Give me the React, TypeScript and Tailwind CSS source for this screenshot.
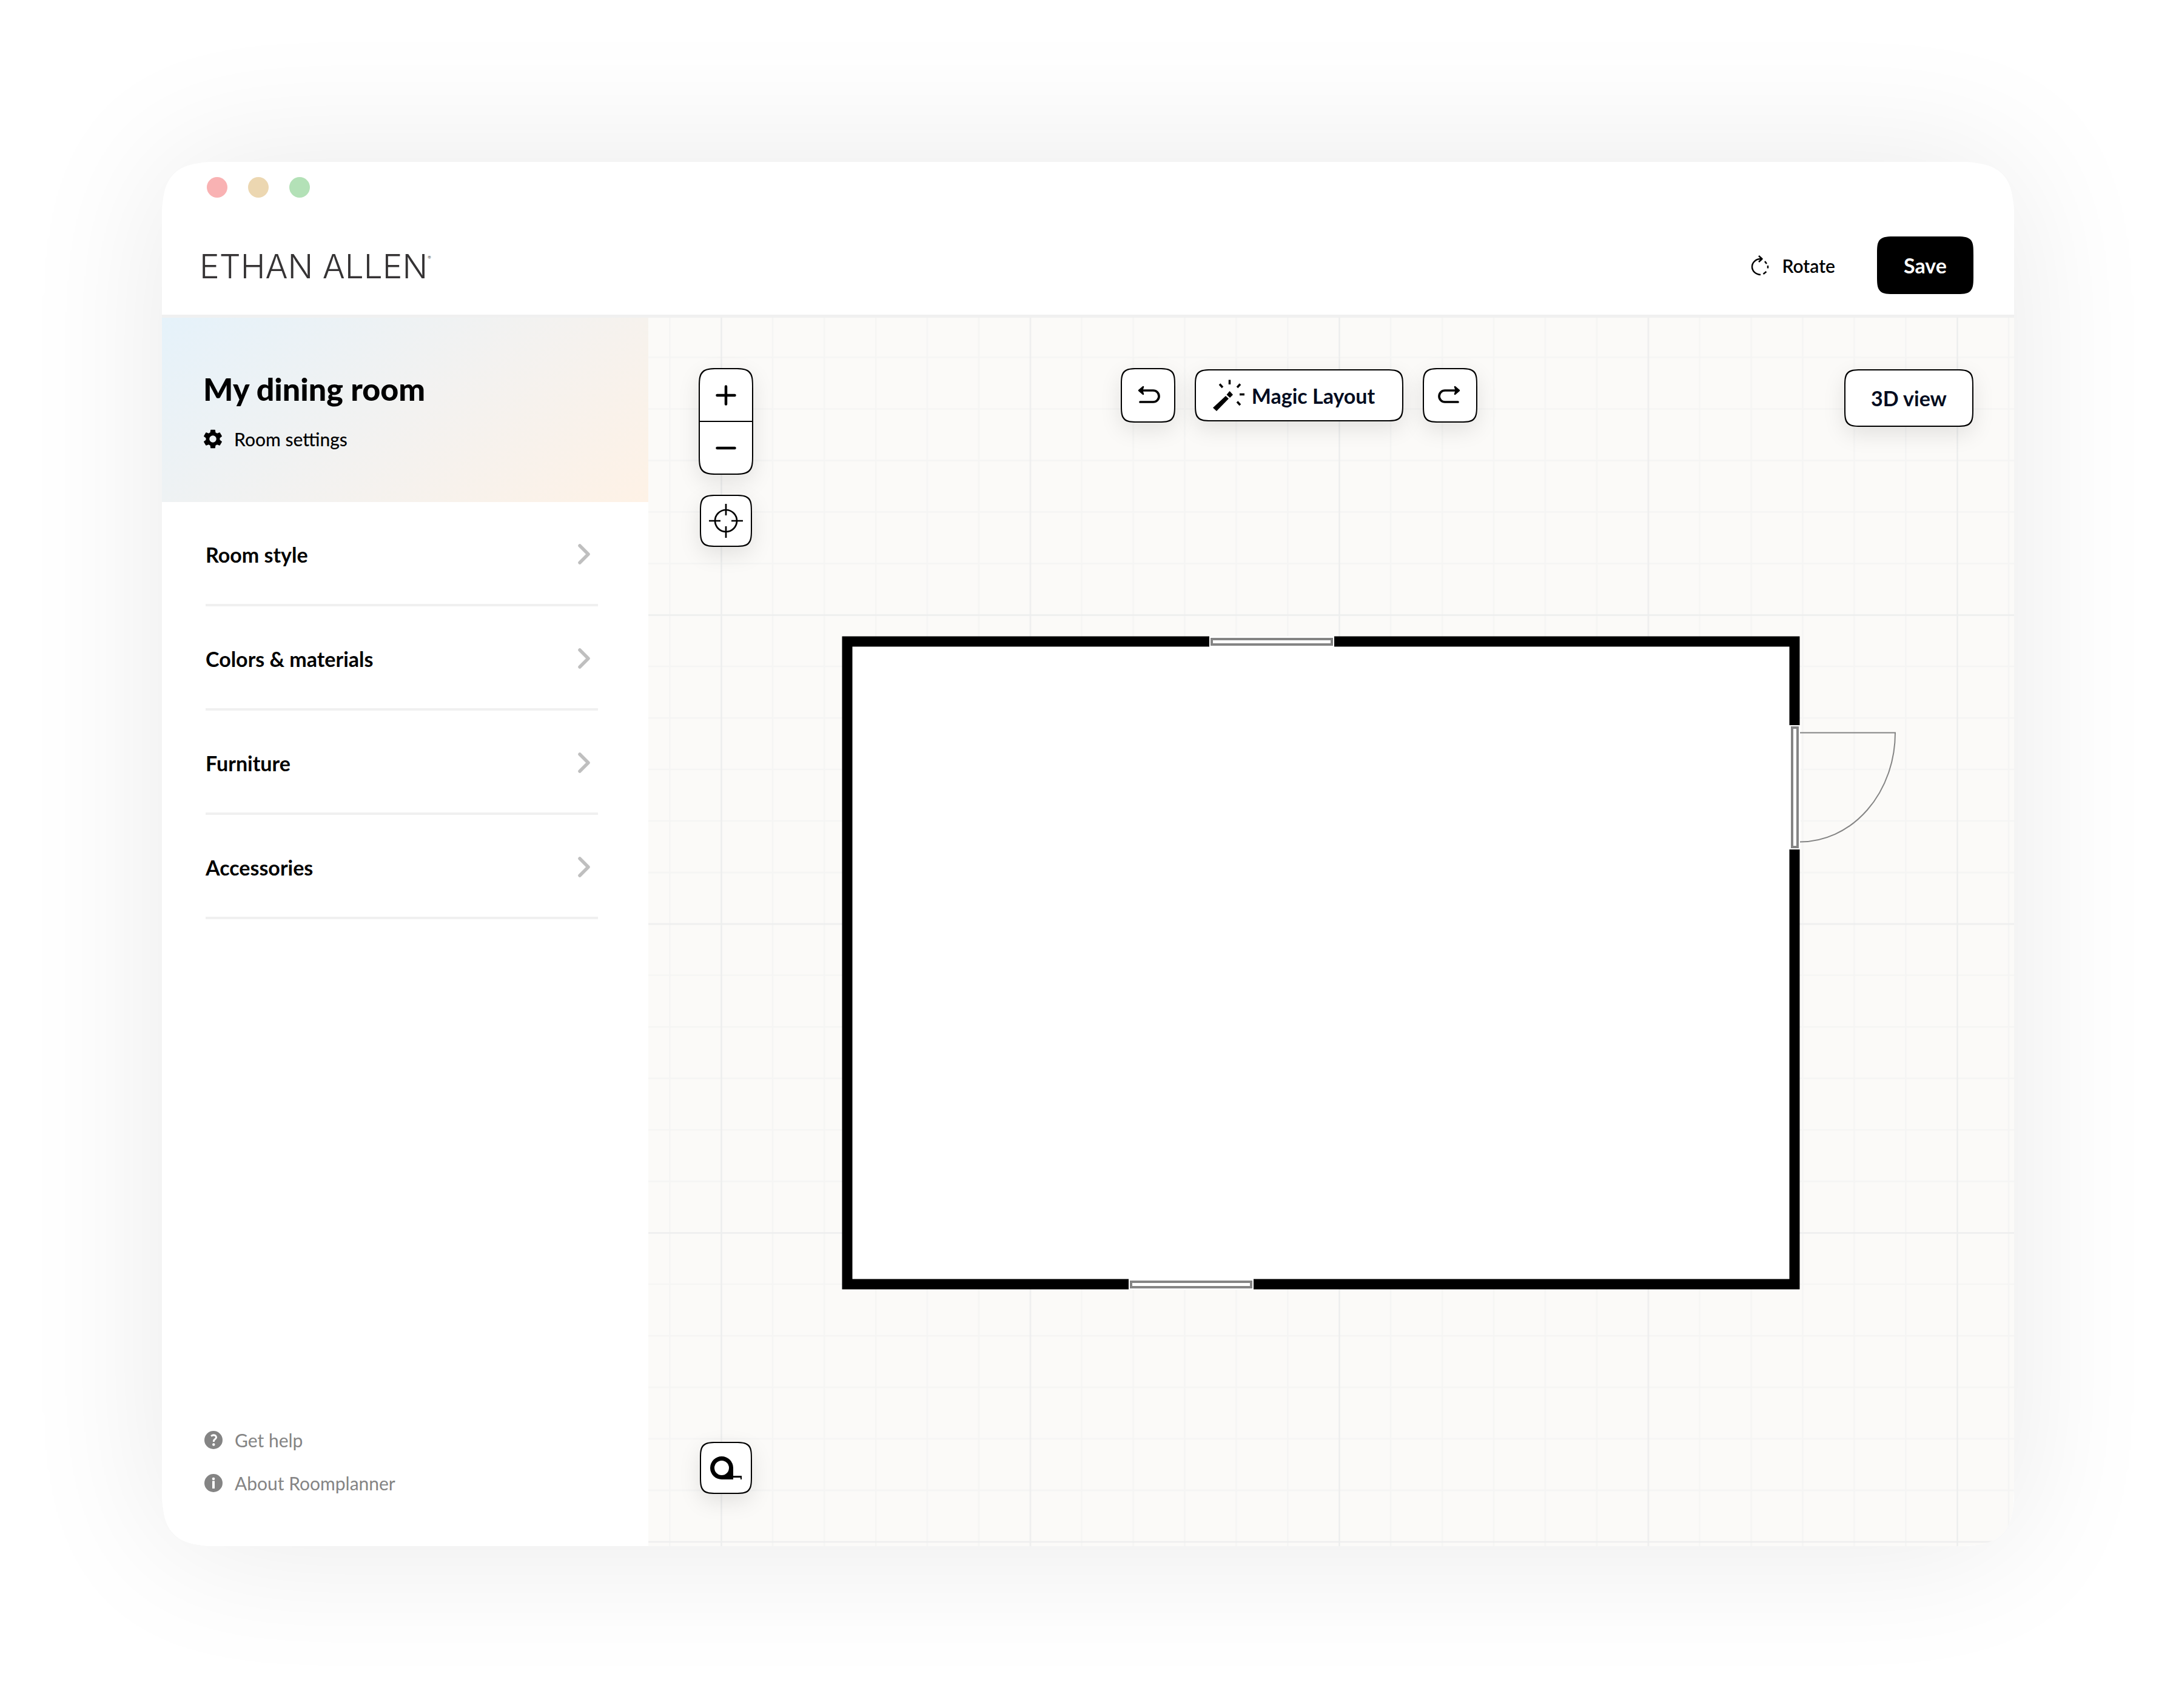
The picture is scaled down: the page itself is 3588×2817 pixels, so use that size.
const Chevron = () => (
  <svg className="h-9 w-6" viewBox="0 0 24 36" fill="none" stroke="#bfbfbf" strokeWidth="5.500" strokeLinecap="round" strokeLinejoin="round" aria-hidden="true">
    <path d="M5 4 L19 18 L5 32" />
  </svg>
);

const Gear = () => (
  <svg className="size-8" viewBox="2 2 20 20" fill="#000" aria-hidden="true">
    <path d="M19.14 12.94c.04-.3.06-.61.06-.94s-.02-.64-.07-.94l2.03-1.58a.49.49 0 0 0 .12-.61l-1.92-3.32a.49.49 0 0 0-.59-.22l-2.39.96a7 7 0 0 0-1.62-.94l-.36-2.54a.48.48 0 0 0-.48-.41h-3.84a.47.47 0 0 0-.47.41l-.36 2.54c-.59.24-1.13.57-1.62.94l-2.39-.96a.48.48 0 0 0-.59.22L2.74 8.87a.47.47 0 0 0 .12.61l2.03 1.58c-.05.3-.09.63-.09.94s.02.64.07.94l-2.03 1.58a.49.49 0 0 0-.12.61l1.92 3.32c.12.22.37.29.59.22l2.39-.96c.5.38 1.03.7 1.62.94l.36 2.54c.05.24.24.41.48.41h3.84c.24 0 .44-.17.47-.41l.36-2.54a6.800 6.800 0 0 0 1.620-.94l2.390.96c.22.08.47 0 .59-.22l1.920-3.320a.47.47 0 0 0-.12-.61zM12 15.600a3.600 3.600 0 1 1 0-7.200 3.600 3.600 0 0 1 0 7.200z" />
  </svg>
);

const RotateIcon = () => (
  <svg className="h-9 w-8" viewBox="0 0 32 36" fill="none" stroke="#000" strokeWidth="2.500" aria-hidden="true">
    <path d="M17 33 A14 13 0 0 1 3 20 A14 13 0 0 1 17 7 H19" />
    <path d="M14 2 L19.500 7 L14 12" strokeLinejoin="round" />
    <path d="M24 11 L27 15 M29 18 V22.500 M26.500 28 L21.500 32" />
  </svg>
);

const UndoIcon = ({ flip = false }: { flip?: boolean }) => (
  <svg className={flip ? "h-8 w-10 -scale-x-100" : "h-8 w-10"} viewBox="0 0 40 32" fill="none" stroke="#000" strokeWidth="3.700" strokeLinecap="round" strokeLinejoin="round" aria-hidden="true">
    <path d="M8 8 H28.500 A9.500 9.500 0 0 1 28.500 27 H7" />
    <path d="M12 2 L5 8 L12 14 L10 8 Z" fill="#000" strokeWidth="2.500" />
  </svg>
);

const WandIcon = () => (
  <svg className="size-13" viewBox="0 0 52 52" aria-hidden="true">
    <path d="M21 27 L26 31.500 L6 52 L0 46.500 Z M27.500 19 L33 25 L28 30 L22.500 25 Z" />
    <path d="M27.500 0.500 V8 M44 24.500 H52 M11 7.500 L16 13 M45 7.500 L40 13 M40 36.500 L45 42" stroke="#000" strokeWidth="3.500" />
  </svg>
);

const TargetIcon = () => (
  <svg className="size-14" viewBox="0 0 56 56" fill="none" stroke="#000" strokeWidth="2.700" aria-hidden="true">
    <circle cx="28" cy="28" r="18" />
    <path d="M28 0 V19 M28 37 V56 M0 28 H19 M37 28 H56" />
  </svg>
);

const TapeIcon = () => (
  <svg className="h-10 w-13" viewBox="0 0 52 40" aria-hidden="true">
    <path fillRule="evenodd" d="M19 1 A19 19 0 0 1 38 20 V33 H52 V39 H50 V36 H38 V39 H19 A19 19 0 0 1 19 1 Z M19 8 A12 12 0 1 0 19 32 A12 12 0 1 0 19 8 Z" />
  </svg>
);

const categories = ["Room style", "Colors & materials", "Furniture", "Accessories"];

const FloorPlan = () => (
  <svg className="absolute inset-0 h-full w-full" aria-label="Floor plan" role="img">
    <defs>
      <pattern id="grid" x="119" y="489" width="509.500" height="509.500" patternUnits="userSpaceOnUse">
        <path d="M86 0V509.500M171 0V509.500M256 0V509.500M341 0V509.500M426 0V509.500M0 86H509.500M0 171H509.500M0 256H509.500M0 341H509.500M0 426H509.500" stroke="#f5f5f4" strokeWidth="2.500" />
        <path d="M1.500 0V509.500M0 1.500H509.500" stroke="#edeeee" strokeWidth="2.500" />
      </pattern>
    </defs>
    <rect width="100%" height="100%" fill="url(#grid)" />
    <rect x="328" y="534" width="1562" height="1060" fill="#fff" stroke="#000" strokeWidth="17" />
    <g fill="#fff">
      <rect x="925" y="525" width="206" height="18" />
      <rect x="792" y="1585" width="206" height="18" />
      <rect x="1881" y="672" width="19" height="205" />
    </g>
    <g fill="#fff" stroke="#848484" strokeWidth="4">
      <rect x="929" y="530" width="198" height="9" />
      <rect x="796" y="1590" width="198" height="9" />
      <rect x="1886" y="676" width="9" height="197" />
    </g>
    <path d="M1899 684.500 H2056 A157 180 0 0 1 1899 864.500" fill="none" stroke="#848484" strokeWidth="2" />
  </svg>
);

const tool = "flex items-center justify-center rounded-[32px] [corner-shape:squircle] border-2 border-black bg-white shadow-[0_12px_36px_rgba(0,0,0,0.1)]";

export default function App() {
  return (
    <div className="flex min-h-screen flex-col bg-white p-[267px] font-['Lato',sans-serif] text-black">
      <div className="flex flex-1 flex-col rounded-[80px] shadow-[0_0_240px_rgba(0,0,0,0.09)]">
        <div className="flex flex-1 flex-col overflow-hidden rounded-[124px] bg-white [corner-shape:squircle]">
          <header className="border-b-[5px] border-[#f0f0f0]">
            <div className="flex gap-[34px] px-[74px] pt-[25px]">
              <span className="size-[34px] rounded-full bg-[#f9b2b3]" />
              <span className="size-[34px] rounded-full bg-[#ecd7b1]" />
              <span className="size-[34px] rounded-full bg-[#b3e1b7]" />
            </div>
            <div className="flex items-center justify-between pt-16 pr-[67px] pb-[34px] pl-[62px]">
              <div className="flex items-start pt-[3px] font-['Inter',sans-serif] text-[55px] leading-[60px] font-light text-[#353334]">
                ETHAN ALLEN
                <span className="mt-3 text-[8px] leading-none">®</span>
              </div>
              <div className="flex items-center gap-[69px]">
                <button className="flex items-center gap-5 text-[30px] leading-9 font-semibold">
                  <RotateIcon />
                  Rotate
                </button>
                <button className="flex h-[95px] w-[159px] items-center justify-center rounded-[32px] bg-black text-[34px] font-bold text-white [corner-shape:squircle]">Save</button>
              </div>
            </div>
          </header>
          <div className="flex flex-1">
            <aside className="flex w-[802px] shrink-0 flex-col bg-white">
              <div className="h-[304px] bg-[linear-gradient(144deg,#e5f2fa_0%,#f3f2f0_52%,#fef2e6_100%)] pt-[81px] pl-[68px]">
                <h1 className="text-[52px] leading-[72px] font-black">My dining room</h1>
                <button className="mt-[25px] flex items-center gap-[19px] text-[30px] leading-[44px] font-medium">
                  <Gear />
                  Room settings
                </button>
              </div>
              <nav className="pr-[83px] pl-[72px]">
                {categories.map((c) => (
                  <button key={c} className="flex h-[172px] w-full items-center justify-between border-b-4 border-[#f0f0f0] pt-1 pr-[11px] text-[34px] font-bold">
                    {c}
                    <Chevron />
                  </button>
                ))}
              </nav>
              <div className="mt-auto flex flex-col gap-[27px] pb-[82px] pl-[70px] text-[30px] leading-[44px] text-[#848484]">
                <a href="#help" className="flex items-center gap-5">
                  <svg className="size-[30px]" viewBox="0 0 30 30" aria-hidden="true">
                    <circle cx="15" cy="15" r="15" fill="#848484" />
                    <path d="M11 8.500 Q15.500 5.500 18.500 8 Q21 11.500 17 14 Q15.300 15.300 15.300 18" fill="none" stroke="#fff" strokeWidth="3" />
                    <circle cx="15.300" cy="22.500" r="2.200" fill="#fff" />
                  </svg>
                  Get help
                </a>
                <a href="#about" className="flex items-center gap-5">
                  <svg className="size-[30px]" viewBox="0 0 30 30" aria-hidden="true">
                    <circle cx="15" cy="15" r="15" fill="#848484" />
                    <circle cx="15" cy="8" r="2.300" fill="#fff" />
                    <path d="M15 11.500 V24" stroke="#fff" strokeWidth="4" />
                  </svg>
                  About Roomplanner
                </a>
              </div>
            </aside>
            <main className="relative flex flex-1 flex-col justify-between bg-[#fbfaf8] px-[83px] pt-[83px] pb-[86px]">
              <FloorPlan />
              <div className="relative flex items-start justify-between">
                <div className="flex flex-col items-center gap-[33px]">
                  <div className="flex h-44 w-[90px] flex-col overflow-hidden rounded-[36px] border-2 border-black bg-white shadow-[0_12px_36px_rgba(0,0,0,0.1)] [corner-shape:squircle]">
                    <button aria-label="Zoom in" className="flex flex-1 items-center justify-center border-b-2 border-black">
                      <svg className="size-[34px]" viewBox="0 0 34 34" stroke="#000" strokeWidth="4.500" strokeLinecap="round" aria-hidden="true">
                        <path d="M17 2.500 V31.500 M2.500 17 H31.500" />
                      </svg>
                    </button>
                    <button aria-label="Zoom out" className="flex flex-1 items-center justify-center">
                      <svg className="size-[34px]" viewBox="0 0 34 34" stroke="#000" strokeWidth="4.500" strokeLinecap="round" aria-hidden="true">
                        <path d="M2.500 17 H31.500" />
                      </svg>
                    </button>
                  </div>
                  <button aria-label="Center view" className={`${tool} size-[86px]`}>
                    <TargetIcon />
                  </button>
                </div>
                <div className="flex items-center gap-8">
                  <button aria-label="Undo" className={`${tool} size-[90px]`}>
                    <UndoIcon />
                  </button>
                  <button className={`${tool} h-[86px] w-[344px] gap-3 pr-4 text-[34px] font-bold text-[#020c20]`}>
                    <WandIcon />
                    Magic Layout
                  </button>
                  <button aria-label="Redo" className={`${tool} size-[90px]`}>
                    <UndoIcon flip />
                  </button>
                </div>
                <button className={`${tool} mt-0.5 -mr-4 h-[95px] w-[213px] text-[34px] font-bold text-[#020c20]`}>3D view</button>
              </div>
              <button aria-label="Measure" className={`${tool} relative ml-0.5 size-[86px]`}>
                <TapeIcon />
              </button>
            </main>
          </div>
        </div>
      </div>
    </div>
  );
}
